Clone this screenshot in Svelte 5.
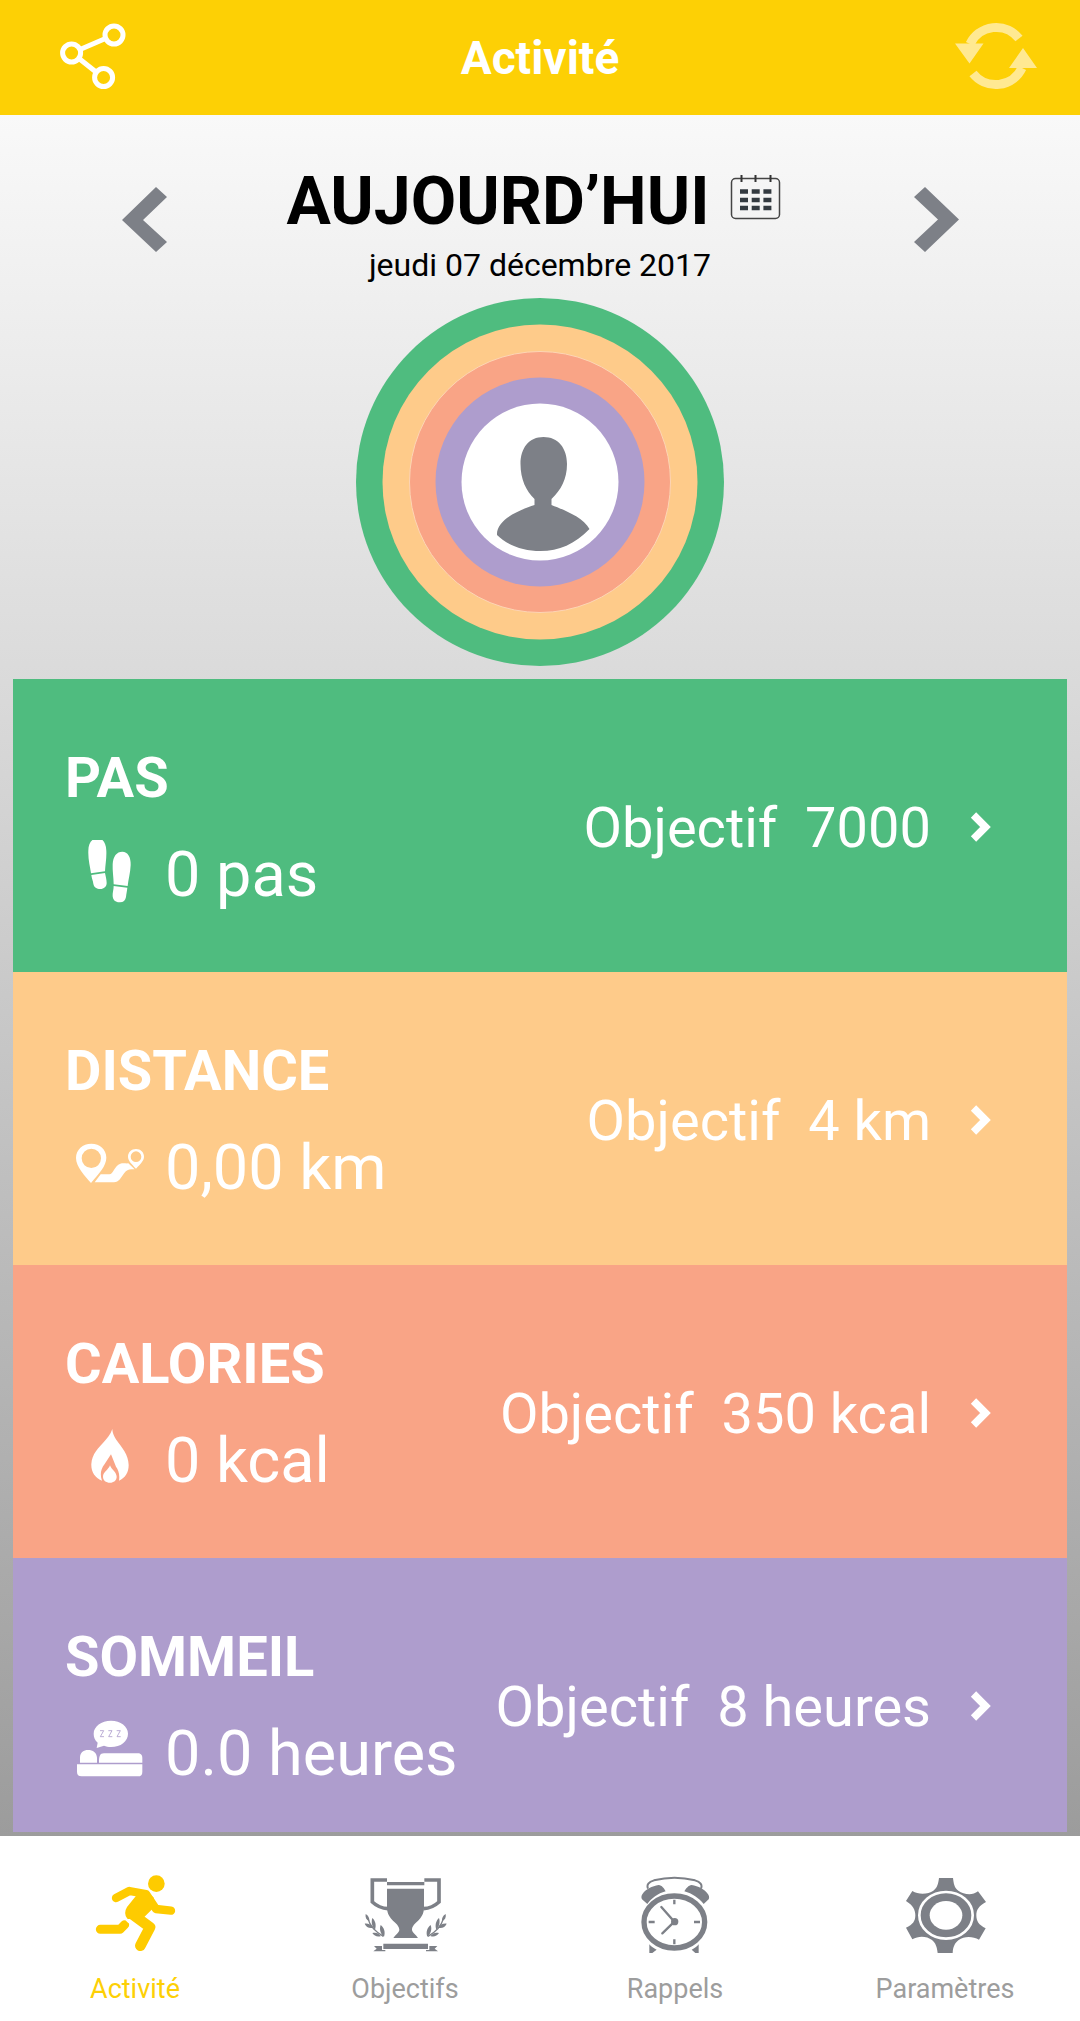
<script>
	let stats = [
		{ id: 'steps', title: 'PAS', value: '0 pas', goal: '7000' },
		{ id: 'distance', title: 'DISTANCE', value: '0,00 km', goal: '4 km' },
		{ id: 'calories', title: 'CALORIES', value: '0 kcal', goal: '350 kcal' },
		{ id: 'sleep', title: 'SOMMEIL', value: '0.0 heures', goal: '8 heures' }
	]
	let tabs = [
		{ id: 'activity', label: 'Activité' },
		{ id: 'goals', label: 'Objectifs' },
		{ id: 'reminders', label: 'Rappels' },
		{ id: 'settings', label: 'Paramètres' }
	]
	let current = 'activity'
</script>

<div class="app">
	<header>
		<button aria-label="Partager">
			<svg viewBox="-8 0 85 85" fill="none" stroke="#fff" stroke-width="5">
				<circle cx="21.6" cy="38" r="9" />
				<circle cx="64" cy="20" r="9" />
				<circle cx="53.6" cy="62.5" r="9" />
				<path d="M30 34.5L55.5 23.5M29 43.5L46 57" />
			</svg>
		</button>
		<h1>Activité</h1>
		<button aria-label="Synchroniser">
			<svg viewBox="0 0 85 85" fill="none" stroke="#ffe992" stroke-width="9">
				<path d="M66 23.500A29 29 0 0 0 17 29M20 58.500A29 29 0 0 0 69 53" />
				<path d="M2 28.500H30.500L16.500 48.500ZM70 33L84 53H56Z" fill="#ffe992" stroke="none" />
			</svg>
		</button>
	</header>

	<main>
		<section class="day">
			<button class="arrow" aria-label="Jour précédent">
				<svg viewBox="0 0 72 110"><path d="M14 55L48 22L59 32L35 55L59 77L48 87Z" /></svg>
			</button>
			<div class="date">
				<div class="today">
					<h2>AUJOURD’HUI</h2>
					<button class="calendar" aria-label="Calendrier">
						<svg viewBox="0 0 72 72">
							<rect x="10.500" y="13.500" width="48" height="40" rx="4" fill="none" stroke="#444" stroke-width="1.500" />
							<path d="M20.500 10V17M34.500 10V17M49.500 10V17" stroke="#333" stroke-width="2" />
							<path d="M19 26.500H51M19 35H51M19 43H51" stroke="#333a40" stroke-width="4.500" stroke-dasharray="8 3.700" />
						</svg>
					</button>
				</div>
				<p>jeudi 07 décembre 2017</p>
			</div>
			<button class="arrow" aria-label="Jour suivant">
				<svg viewBox="0 0 72 110"><path d="M59 54.500L25 87L14 77L38 54.500L14 32L25 22Z" /></svg>
			</button>
		</section>

		<svg class="rings" viewBox="0 0 368 368">
			<circle cx="184" cy="184" r="184" fill="#4fbc7f" />
			<circle cx="184" cy="184" r="157.500" fill="#fecb8a" />
			<circle cx="184" cy="184" r="130.500" fill="#f9a486" stroke="#fdd5b5" />
			<circle cx="184" cy="184" r="104.500" fill="#ae9dcd" />
			<circle cx="184" cy="184" r="78.500" fill="#fff" />
			<path
				fill="#7d8087"
				d="M187.500 139C202 139 211 150 211 166C211 181 205 192 195.500 201V207C208 212 227 219 233.500 231C219 246 203 253 184.500 253C167 253 151 247 141 237C140 222 163 212 178.500 207V201C170 193 164.500 181 164.500 166C164.500 150 173 139 187.500 139Z"
			/>
		</svg>

		<div class="cards">
			{#each stats as stat}
			<a class="card {stat.id}" href="#{stat.id}">
				<div class="info">
					<h3>{stat.title}</h3>
					<div class="value">
						{#if stat.id === 'steps'}
						<svg viewBox="0 15 210 210" fill="#fff">
							<path d="M67 10C82 9 93 22 94 47C95 70 91 88 90 109L48 115C45 92 39 74 40 47C40 24 51 10 67 10Z" />
							<path d="M49 120L90 114C92 125 95 133 95 144C95 155 87 162 76 162C65 162 57 157 55 146C54 137 50 130 49 120Z" />
							<path d="M142 50C158 50 168 66 167 90C166 114 160 132 158 153L116 148C116 128 112 108 113 88C114 64 125 50 142 50Z" />
							<path d="M116 153L157 158C156 168 154 176 153 186C151 197 144 203 133 202C121 202 114 195 113 184C112 173 116 165 116 153Z" />
						</svg>
						{:else if stat.id === 'distance'}
						<svg viewBox="75 339 210 210" fill="#fff">
							<path fill-rule="evenodd" d="M124 371C150 371 169 389 169 413C169 438 147 460 123 489C104 467 78 440 78 414C78 389 98 371 124 371ZM124 386A29 29 0 1 0 124 444A29 29 0 1 0 124 386Z" />
							<path fill-rule="evenodd" d="M258 387C272 387 282 397 282 410C282 422 271 432 258 446C246 433 234 422 234 410C234 397 244 387 258 387ZM258 394A16 16 0 1 0 258 426A16 16 0 1 0 258 394Z" />
							<path d="M152 463H178C190 463 193 437 211 431C220 428 227 431 235 430L254 448C236 446 231 449 223 459C212 473 207 487 192 487H134Z" />
						</svg>
						{:else if stat.id === 'calories'}
						<svg viewBox="75 318 210 210" fill="#fff">
							<path d="M187 327C188 365 235 385 236 435C236 457 226 474 207 482C210 463 205 450 198 440L183 403L164 432C151 449 150 465 156 482C134 473 123 454 124 432C126 386 174 367 187 327Z" />
							<path d="M180 436C184 449 200 456 200 470C200 481 191 488 180 488C168 488 159 481 159 470C159 456 175 450 180 436Z" />
						</svg>
						{:else}
						<svg viewBox="75 327 210 210" fill="#fff">
							<path d="M183 332C212 332 234 349 234 371C234 394 212 411 183 411C175 411 168 409 162 407L140 414L143 398C134 390 131 381 131 371C131 349 154 332 183 332Z" />
							<path d="M150 362H161L151 380H162M175 362H186L176 380H187M200 362H211L201 380H212" fill="none" stroke="#ae9dcd" stroke-width="2.500" />
							<path d="M90 458V442C91 426 101 420 114 420C129 420 140 428 141 443V458ZM147 458C147 440 149 430 162 430H264C274 430 277 437 277 445V458ZM81 463H277V485C277 495 273 499 264 499H95C85 499 81 494 81 485Z" />
						</svg>
						{/if}
						<span>{stat.value}</span>
					</div>
				</div>
				<div class="goal">
					<span>Objectif&nbsp; {stat.goal}</span>
					<svg viewBox="0 1 22 36"><path d="M3.500 6L15.500 18L3.500 30" fill="none" stroke="#fff" stroke-width="7.500" /></svg>
				</div>
			</a>
			{/each}
		</div>
	</main>

	<nav>
		{#each tabs as tab}
		<a class:active={tab.id === current} href="#{tab.id}">
			{#if tab.id === 'activity'}
			<svg viewBox="99 132 252 240" fill="none" stroke="#fecb00" stroke-linecap="round" stroke-linejoin="round">
				<circle cx="289" cy="161" r="25" fill="#fecb00" stroke="none" />
				<path d="M168 204L208 183L258 192L288 237L333 242" stroke-width="25" />
				<path d="M222 184C240 182 262 186 278 204L284 226L250 260L204 264C196 254 198 242 204 232L236 192Z" fill="#fecb00" stroke-width="6" />
				<path d="M216 252L270 292L241 347" stroke-width="32" />
				<path d="M121 298H180L194 284" stroke-width="27" />
				<path d="M193 260C196 272 208 280 222 287" stroke="#fff" stroke-width="4" />
			</svg>
			{:else if tab.id === 'goals'}
			<svg viewBox="909 132 252 240" fill="#7d8087">
				<path d="M981 156H1093V166H981ZM981 176H1092V232C1092 272 1057 277 1056 299C1056 308 1069 314 1074 324H1000C1006 314 1018 308 1018 299C1017 277 981 272 981 232Z" />
				<path d="M981 150H937V216C950 228 965 235 984 236M1093 150H1137V216C1124 228 1109 235 1090 236" fill="none" stroke="#7d8087" stroke-width="11" />
				<path d="M970 341H1104V357H970ZM942 348H966V360H976V364H940L950 356ZM1132 348H1108V360H1098V364H1134L1124 356Z" />
				<path d="M917 252C925 256 929 264 928 274C919 270 915 262 917 252ZM914 281C925 280 934 284 940 293C928 296 918 291 914 281ZM937 264C946 272 950 285 945 299C936 290 933 276 937 264ZM937 309C948 306 955 309 963 318C952 322 943 318 937 309ZM962 285C972 292 977 306 972 320C962 313 957 298 962 285Z" />
				<path d="M924 266C928 282 942 303 970 319" fill="none" stroke="#7d8087" stroke-width="4" />
				<g transform="translate(2074 0) scale(-1 1)">
					<path d="M917 252C925 256 929 264 928 274C919 270 915 262 917 252ZM914 281C925 280 934 284 940 293C928 296 918 291 914 281ZM937 264C946 272 950 285 945 299C936 290 933 276 937 264ZM937 309C948 306 955 309 963 318C952 322 943 318 937 309ZM962 285C972 292 977 306 972 320C962 313 957 298 962 285Z" />
					<path d="M924 266C928 282 942 303 970 319" fill="none" stroke="#7d8087" stroke-width="4" />
				</g>
			</svg>
			{:else if tab.id === 'reminders'}
			<svg viewBox="159 132 252 240" fill="#7d8087">
				<ellipse cx="283" cy="276" rx="91" ry="78" fill="none" stroke="#7d8087" stroke-width="16" />
				<path d="M204 176C199 164 206 156 222 151C260 141 307 141 345 151C361 156 368 164 363 176" fill="none" stroke="#7d8087" stroke-width="6" />
				<path d="M202 222L186 208C183 203 184 196 188 191C198 178 216 168 236 165C246 166 252 175 257 184C233 191 215 204 202 222ZM371 222L386 208C389 203 387 196 383 191C373 178 355 168 335 165C325 166 319 175 313 184C337 191 357 204 371 222Z" />
				<path d="M208 343C214 350 221 355 230 359L217 369H208ZM356 343C350 350 344 355 335 359L346 369H356Z" />
				<path d="M283 209V223M283 328V343M206 276H224M342 276H360" fill="none" stroke="#7d8087" stroke-width="7" />
				<path d="M244 231L283 275L247 310" fill="none" stroke="#7d8087" stroke-width="7" stroke-linecap="round" />
				<circle cx="284" cy="275" r="11" />
			</svg>
			{:else}
			<svg viewBox="969 132 252 240" fill="#7d8087">
				<path d="M1077 144H1119C1121 160 1123 174 1135 182C1151 193 1176 198 1194 184L1218 216C1196 228 1189 240 1189 256C1189 273 1196 285 1217 295L1197 329C1178 318 1152 318 1136 330C1124 339 1119 351 1118 369H1073C1071 351 1067 339 1056 330C1041 318 1016 316 997 328L978 293C999 284 1006 273 1006 256C1006 240 999 226 978 213L997 183C1016 195 1045 193 1060 182C1072 174 1075 160 1077 144Z" />
				<ellipse cx="1098" cy="256" rx="80" ry="70" fill="none" stroke="#fff" stroke-width="8" />
				<ellipse cx="1098" cy="256" rx="49" ry="43" fill="#fff" />
			</svg>
			{/if}
			<span>{tab.label}</span>
		</a>
		{/each}
	</nav>
</div>

<style>
	:global(body){
		margin: 0;
	}
	.app{
		display: flex;
		flex-direction: column;
		height: 100vh;
		font-family: Roboto, "Liberation Sans", sans-serif;
	}
	h1, h2, h3, p{
		margin: 0;
	}
	button{
		display: flex;
		padding: 0;
		border: none;
		background: none;
		cursor: pointer;
	}
	a{
		text-decoration: none;
	}
	svg{
		display: block;
		flex-shrink: 0;
	}
	header{
		display: flex;
		justify-content: space-between;
		align-items: center;
		flex-shrink: 0;
		height: 115px;
		padding: 0 42px;
		background-color: #fdd005;
	}
	header h1{
		font-size: 46px;
		line-height: 52px;
		color: #fff;
	}
	header svg{
		width: 85px;
		height: 85px;
	}
	main{
		display: flex;
		flex-direction: column;
		align-items: center;
		flex: 1;
		min-height: 0;
		padding: 50px 13px 4px;
		background: linear-gradient(#f9f9f9, #dadada 33%, #bbbbbb 66%, #9c9c9c);
	}
	.day{
		display: flex;
		justify-content: space-between;
		align-items: flex-start;
		align-self: stretch;
		padding: 0 95px;
	}
	.arrow svg{
		width: 72px;
		height: 110px;
		fill: #7d8087;
	}
	.date{
		text-align: center;
	}
	.today{
		display: flex;
		justify-content: center;
		align-items: flex-start;
		gap: 12px;
	}
	.today h2{
		font-size: 66px;
		line-height: 74px;
	}
	.calendar svg{
		width: 72px;
		height: 72px;
	}
	.date p{
		margin-top: 6px;
		font-size: 32px;
		line-height: 40px;
	}
	.rings{
		width: 368px;
		height: 368px;
		margin: 13px 0;
	}
	.cards{
		align-self: stretch;
		flex: 1;
		min-height: 0;
		overflow-y: auto;
		scrollbar-width: none;
	}
	.card{
		display: flex;
		justify-content: space-between;
		align-items: center;
		padding: 67px 75px 61px 52px;
		color: #fff;
	}
	.steps{
		background-color: #4fbc7f;
	}
	.distance{
		background-color: #fecb8a;
	}
	.calories{
		background-color: #f9a486;
	}
	.sleep{
		background-color: #ae9dcd;
	}
	.card h3{
		font-size: 56px;
		line-height: 64px;
	}
	.value{
		display: flex;
		align-items: center;
		gap: 20px;
		margin-top: 29px;
		padding-left: 10px;
		font-size: 63px;
		line-height: 72px;
	}
	.value svg{
		width: 70px;
		height: 70px;
	}
	.goal{
		display: flex;
		align-items: center;
		gap: 39px;
		padding-bottom: 2px;
		font-size: 56px;
		line-height: 64px;
	}
	.goal svg{
		width: 22px;
		height: 36px;
	}
	nav{
		display: grid;
		grid-template-columns: repeat(4, 1fr);
		flex-shrink: 0;
		padding: 38px 0 16px;
		background-color: #fff;
	}
	nav a{
		display: flex;
		flex-direction: column;
		align-items: center;
		gap: 19px;
		font-size: 27px;
		line-height: 32px;
		color: #9d9d9d;
	}
	nav a.active{
		color: #fdd005;
	}
	nav svg{
		width: 84px;
		height: 80px;
	}
</style>
